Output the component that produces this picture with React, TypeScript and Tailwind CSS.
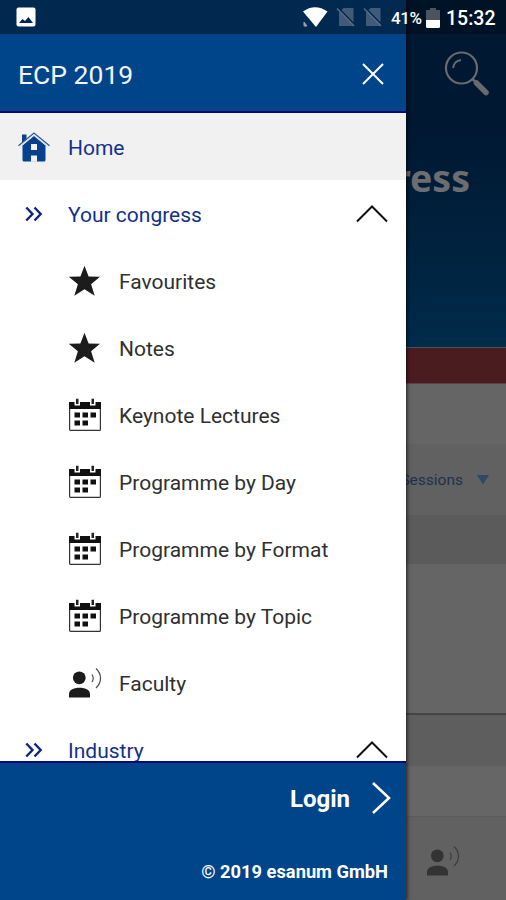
import type { ReactNode } from "react";

interface IconProps {
  className?: string;
}

function StarIcon() {
  return (
    <svg viewBox="0 0 32 32" className="h-8 w-8" fill="#1c1c1c">
      <path d="M16.500 .8l4.100 10.600 11.400.4-8.900 7.400 3.600 11.500-10.200-6.500-10.200 6.500 3.600-11.500L.8 11.800l11.600-.4z" />
    </svg>
  );
}

function CalendarIcon() {
  return (
    <svg viewBox="0 0 34 34" className="h-[34px] w-[34px]">
      <rect x="1.6" y="5" width="30.8" height="27.4" rx="1" fill="none" stroke="#333" strokeWidth="1.2" />
      <path d="M1 4h32v7H1z" fill="#111" />
      <path d="M6.500 0h5.500v7.500H6.500zM22 0h5.500v7.500H22z" fill="#fff" />
      <path d="M8 .8h2.500v5.200H8zM23.500 .8H26v5.200h-2.500z" fill="#222" />
      <path
        d="M6.500 14.500h5.500v5H6.500zM14.500 14.500H20v5h-5.500zM22.500 14.500H28v5h-5.500zM6.500 22.500h5.500v5H6.500zM14.500 22.500H20v5h-5.500z"
        fill="#111"
      />
    </svg>
  );
}

function SpeakerIcon({ className }: IconProps) {
  return (
    <svg viewBox="0 0 34 32" className={className} fill="currentColor">
      <circle cx="11.300" cy="10.800" r="6.400" />
      <path d="M1 30.500v-3.500c0-4 4-6.300 10.500-6.300S22 23 22 27v3.500z" />
      <path
        d="M24 7.500c1.500 2.200 1.500 5.200 0 7.500M28 1.500c6 5.500 6 14 0 19.500"
        fill="none"
        stroke="currentColor"
        strokeWidth="1.200"
        strokeOpacity=".8"
      />
    </svg>
  );
}

function HomeIcon() {
  return (
    <svg viewBox="0 0 34 32" className="h-8 w-[34px]">
      <path d="M5 12V3.500h4.500v5z" fill="#07408c" />
      <path d="M17 5l11.500 9.500V29q0 1.500-1.500 1.500H7q-1.500 0-1.500-1.500V14.500z" fill="#07408c" />
      <path d="M1.500 14.800L17 2l15.500 12.800" fill="none" stroke="#2d5a9c" strokeWidth="1.300" />
      <path d="M3 15.500L17 4.100l14 11.400" fill="none" stroke="#dfe4ec" strokeWidth="1" />
      <path d="M14 13h6v6h-6zM14 24.500h6v6.200h-6z" fill="#f1f1f1" />
    </svg>
  );
}

function DoubleChevron() {
  return (
    <svg viewBox="0 0 20 16" className="h-4 w-5" fill="none" stroke="#0d2483" strokeWidth="2.400">
      <path d="M2.300 1.500L8.500 8l-6.200 6.500M10.500 1.500L16.700 8l-6.200 6.500" />
    </svg>
  );
}

function ChevronUp() {
  return (
    <svg viewBox="0 0 32 18" className="h-[18px] w-8" fill="none" stroke="#111" strokeWidth="2">
      <path d="M1 16.500L16 1.500l15 15" />
    </svg>
  );
}

function SearchIcon() {
  return (
    <svg viewBox="0 0 46 46" className="h-[46px] w-[46px]" fill="none" stroke="#676a6e">
      <circle cx="17.500" cy="17" r="15.500" strokeWidth="2.200" />
      <path d="M9 17q1-7 8-8" strokeWidth="1.800" />
      <path d="M28.500 28l3 3" strokeWidth="2.500" />
      <path d="M32.500 32l9.500 9.500" strokeWidth="5.500" strokeLinecap="round" />
    </svg>
  );
}

function NoSimIcon() {
  return (
    <svg viewBox="0 0 20 20" className="h-5 w-5">
      <path d="M7.500 1h10v18H3V5.500z" fill="#405b78" />
      <path d="M2.500 1l16.500 17" stroke="#01254a" strokeWidth="1.500" />
      <path d="M1 1.500l17 17.500" stroke="#536b85" strokeWidth="1.500" />
    </svg>
  );
}

function StatusBar() {
  return (
    <div className="absolute inset-x-0 top-0 flex h-[34px] items-center pr-[11px] pl-4 text-white">
      <svg viewBox="0 0 20 20" className="h-5 w-5">
        <rect x=".5" y=".5" width="19" height="19" rx="2" fill="#fff" />
        <path d="M3 16l3.500-4 2.500 2 3.500-4L17 16z" fill="#012650" />
      </svg>
      <div className="ml-auto flex items-center">
        <svg viewBox="0 0 26 20" className="h-5 w-[26px]">
          <path d="M1 4.500Q13-4 25.500 4.500L14 20z" fill="#fff" />
          <path d="M2 15v4h3z" fill="#8fa2b8" stroke="#8fa2b8" />
        </svg>
        <div className="ml-2 flex gap-[7px]">
          <NoSimIcon />
          <NoSimIcon />
        </div>
        <span className="mt-[3px] ml-2 w-[33px] text-[17px] font-medium tracking-[-0.4px] whitespace-nowrap">41%</span>
        <svg viewBox="0 0 14 20" className="mt-[2px] ml-[2px] h-5 w-[14px]">
          <path d="M4 0h6v2h4v11H0V2h4z" fill="#4a545f" />
          <path d="M0 12h14v6.500q0 1.500-1.500 1.500h-11Q0 20 0 18.500z" fill="#fff" />
        </svg>
        <span className="mt-[3px] ml-[6px] w-[49px] text-[19.5px] font-medium whitespace-nowrap">15:32</span>
      </div>
    </div>
  );
}

// Dimmed page behind the drawer
function CongressPage() {
  return (
    <div className="flex h-full flex-col">
      <div className="h-[34px] shrink-0 bg-[#001226]" />
      <div className="flex h-[313px] shrink-0 flex-col items-end bg-linear-to-b from-[#001832] from-30% to-[#002b4a]">
        <div className="mt-[17px] mr-4">
          <SearchIcon />
        </div>
        <h1 className="mt-[54px] mr-9 font-['Noto_Sans'] text-[37.5px] leading-[54px] font-bold text-[#6b6d70]">
          Congress
        </h1>
      </div>
      <div className="h-[37px] shrink-0 border-y border-t-[#4c5257] border-b-[#5c4245] bg-[#4a1c20]" />
      <div className="h-[60px] shrink-0 bg-[#656565]" />
      <div className="flex h-[71px] shrink-0 items-center justify-end bg-[#616161] pr-[17px]">
        <span className="mt-[2px] text-[15.5px] text-[#22304f]">Sessions</span>
        <svg viewBox="0 0 12 10" className="ml-[14px] h-[10px] w-3">
          <path d="M0 0h12L6 9.500z" fill="#2a4b63" />
        </svg>
      </div>
      <div className="h-[49px] shrink-0 bg-[#5b5b5b]" />
      <div className="h-[151px] shrink-0 border-b-2 border-[#444] bg-[#656565]" />
      <div className="h-[51px] shrink-0 bg-[#5e5e5e]" />
      <div className="h-[50px] shrink-0 bg-[#666]" />
      <div className="flex flex-1 items-center justify-end border-t border-[#5b5b5b] bg-[#616161] pr-[46px]">
        <SpeakerIcon className="mt-1 h-8 w-[34px] text-[#333]" />
      </div>
    </div>
  );
}

function GroupRow({ label }: { label: string }) {
  return (
    <div className="flex h-[67px] shrink-0 items-center pr-[18px] pl-6">
      <DoubleChevron />
      <span className="mt-1 ml-6 text-[21px] text-[#12318a]">{label}</span>
      <span className="ml-auto">
        <ChevronUp />
      </span>
    </div>
  );
}

function ItemRow({ icon, label }: { icon: ReactNode; label: string }) {
  return (
    <div className="flex h-[67px] shrink-0 items-center pl-[68px]">
      <span className="flex w-[51px]">{icon}</span>
      <span className="mt-1 text-[21px] text-[#303030]">{label}</span>
    </div>
  );
}

const calendarItems = ["Keynote Lectures", "Programme by Day", "Programme by Format", "Programme by Topic"];

function Drawer() {
  return (
    <aside className="absolute inset-y-0 left-0 flex w-[406px] flex-col bg-white shadow-[1px_0_4px_rgba(0,0,0,0.7)]">
      <div className="h-[34px] shrink-0 bg-[#012950]" />
      <header className="flex h-[79px] shrink-0 items-center border-b-2 border-[#06087c] bg-[#00448a] pr-[22px] pl-[18px]">
        <span className="mt-[5px] text-[26.5px] text-[#f3f5ff]">ECP 2019</span>
        <svg viewBox="0 0 22 22" className="mt-[2px] ml-auto h-[22px] w-[22px]" stroke="#fff" strokeWidth="2">
          <path d="M1 1l20 20M21 1L1 21" />
        </svg>
      </header>
      <nav className="flex flex-1 flex-col overflow-hidden">
        <div className="flex h-[67px] shrink-0 items-center bg-[#f1f1f1] pl-[17px]">
          <HomeIcon />
          <span className="mt-1 ml-[17px] text-[21px] text-[#12318a]">Home</span>
        </div>
        <GroupRow label="Your congress" />
        <ItemRow icon={<StarIcon />} label="Favourites" />
        <ItemRow icon={<StarIcon />} label="Notes" />
        {calendarItems.map((label) => (
          <ItemRow key={label} icon={<CalendarIcon />} label={label} />
        ))}
        <ItemRow icon={<SpeakerIcon className="h-8 w-[34px] text-[#1c1c1c]" />} label="Faculty" />
        <GroupRow label="Industry" />
      </nav>
      <footer className="flex h-[139px] shrink-0 flex-col items-end border-t-2 border-[#06087c] bg-[#00448a] text-white">
        <div className="mt-[15px] mr-[15px] flex items-center">
          <span className="mt-[3px] text-[24px] font-bold">Login</span>
          <svg viewBox="0 0 20 34" className="ml-[21px] h-[34px] w-5" fill="none" stroke="#fff" strokeWidth="2.500">
            <path d="M2 2l16 15L2 32" />
          </svg>
        </div>
        <span className="mt-[41px] mr-[18px] text-[18.3px] font-bold">© 2019 esanum GmbH</span>
      </footer>
    </aside>
  );
}

export default function App() {
  return (
    <div className="relative h-[900px] w-[506px] overflow-hidden font-['Roboto',sans-serif]">
      <CongressPage />
      <Drawer />
      <StatusBar />
    </div>
  );
}
